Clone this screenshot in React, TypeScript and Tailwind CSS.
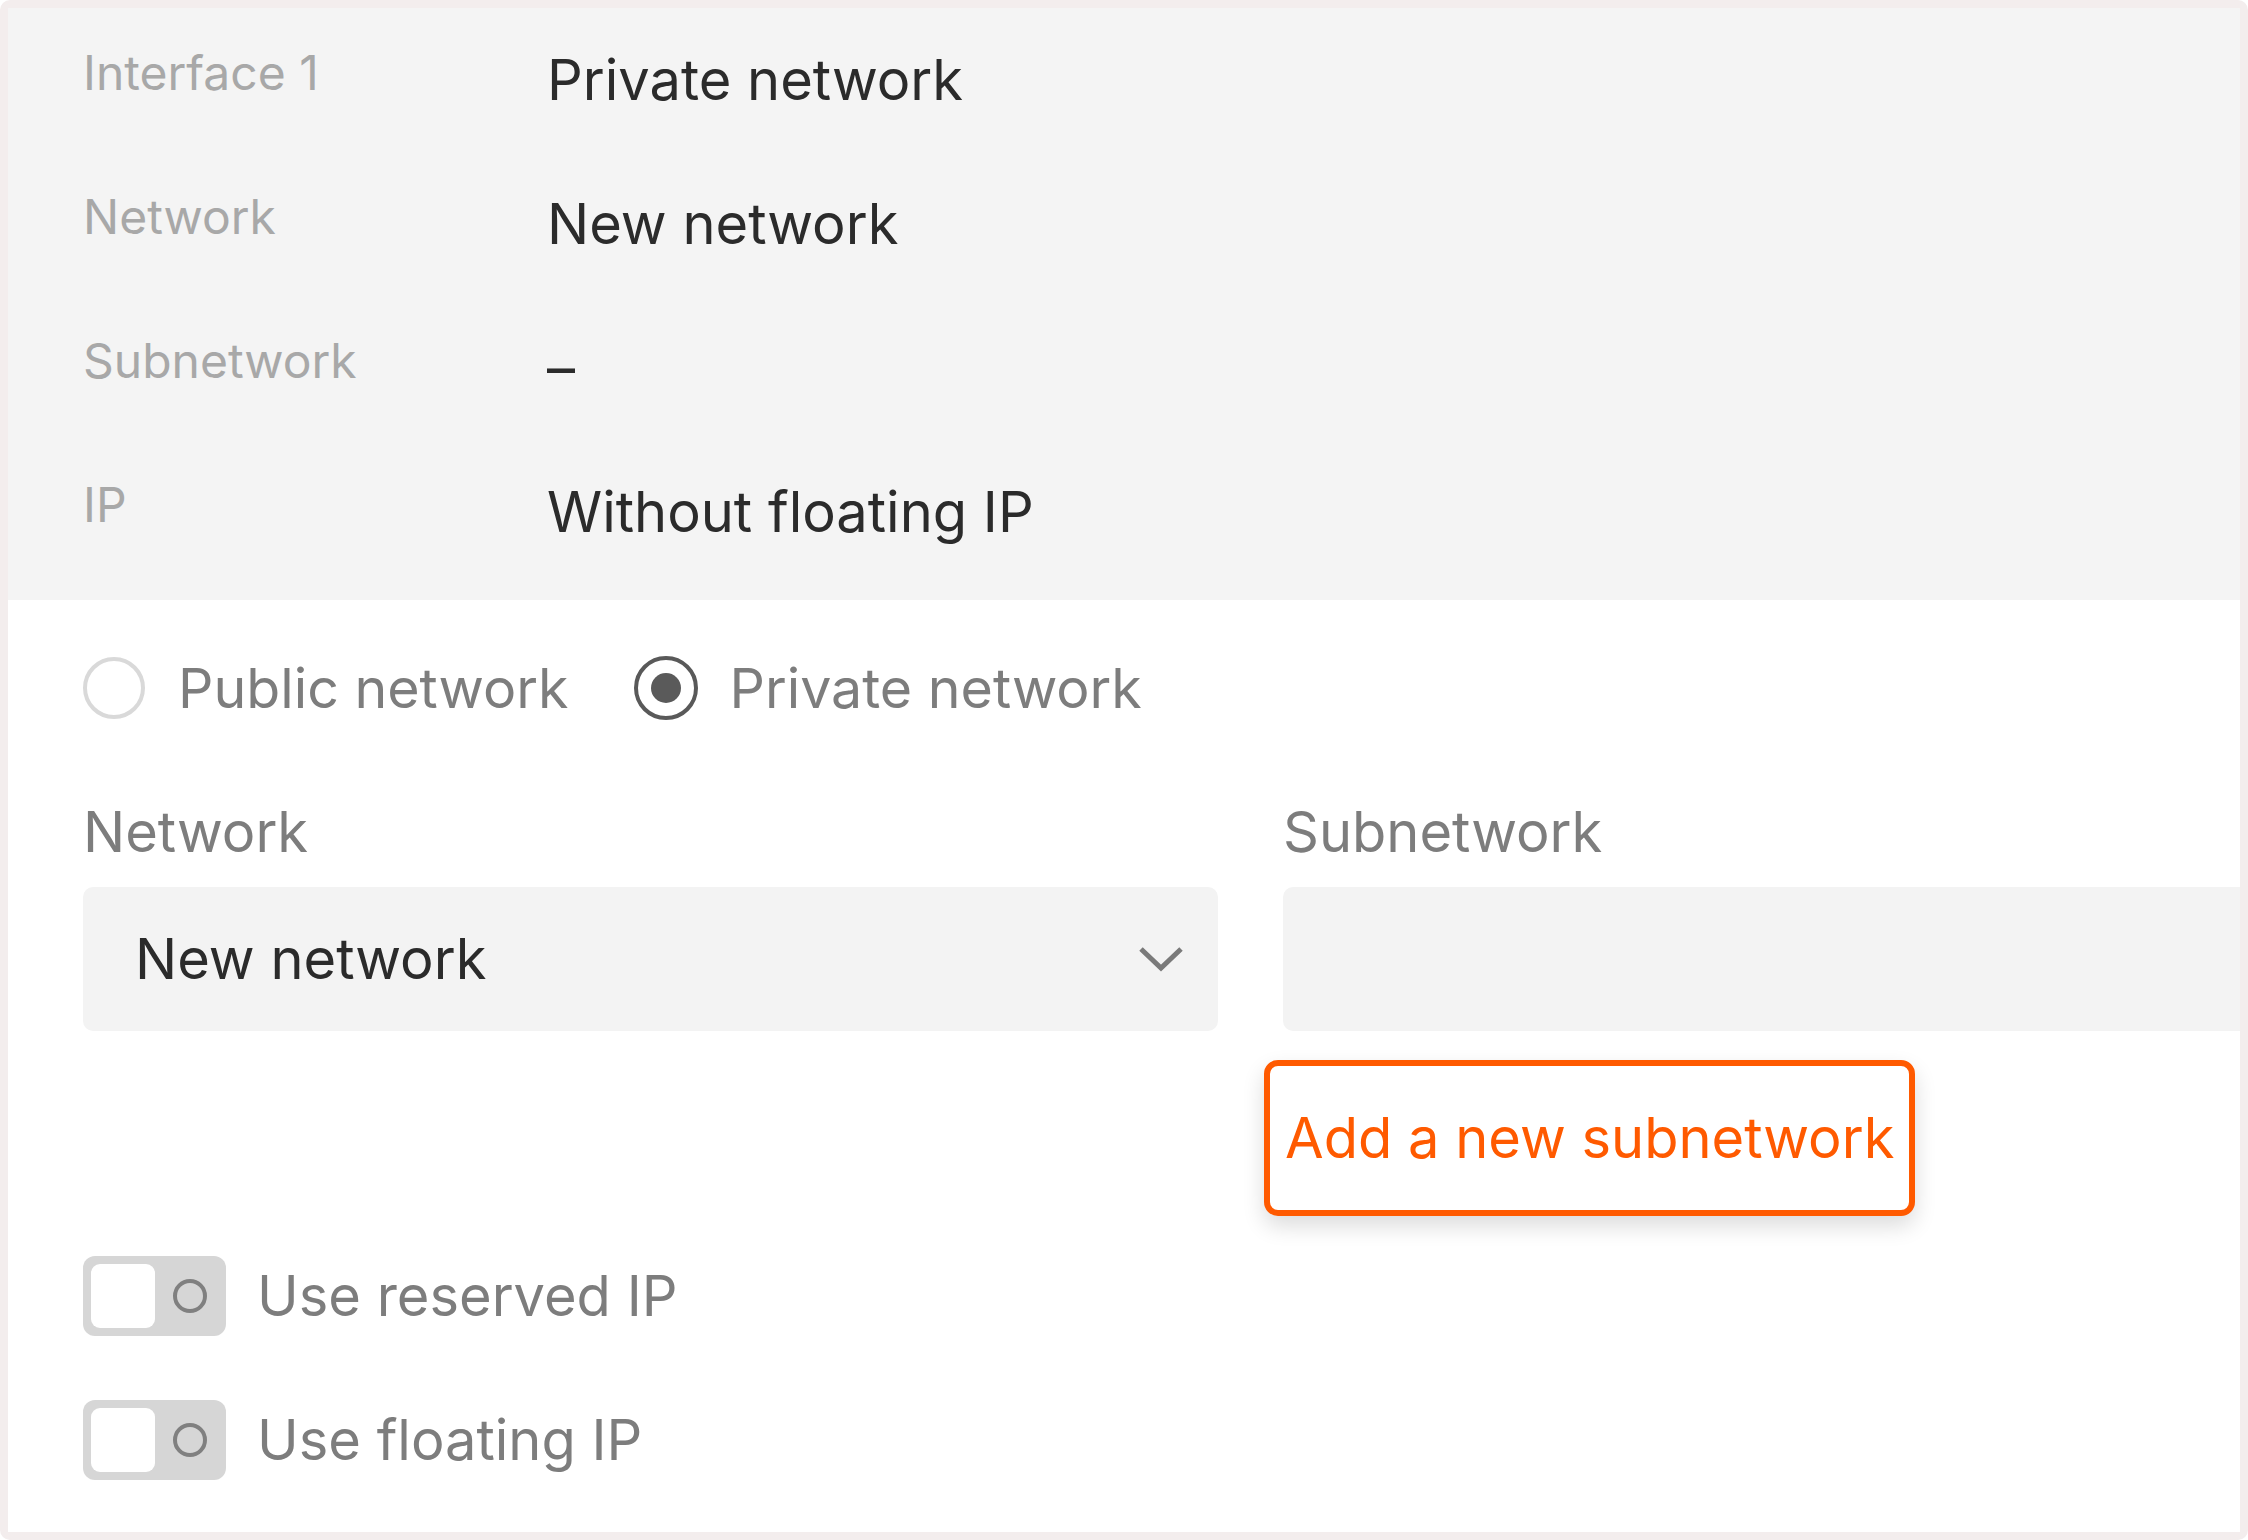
import React from "react";

const summary = [
  { label: "Interface 1", value: "Private network" },
  { label: "Network", value: "New network" },
  { label: "Subnetwork", value: "–" },
  { label: "IP", value: "Without floating IP" },
];

const Toggle = ({ label }: { label: string }) => {
  return (
    <div className="flex items-center gap-[31px]">
      <div className="w-[143px] h-[80px] rounded-[12px] bg-[#d6d6d6] p-[8px] flex items-center">
        <div className="w-[64px] h-[64px] rounded-[9px] bg-white" />
        <svg width="36" height="36" viewBox="0 0 36 36" className="ml-[17px]">
          <circle cx="18" cy="18" r="15" fill="none" stroke="#808080" strokeWidth="4" />
        </svg>
      </div>
      <span className="text-[56px] leading-[64px] text-[#7d7d7d]">{label}</span>
    </div>
  );
};

const App = () => {
  return (
    <div
      className="w-[2248px] h-[1540px] bg-white"
      style={{ fontFamily: "Inter, 'Noto Sans', sans-serif" }}
    >
      <div className="w-full h-full bg-[#f3eded] rounded-[10px] p-[8px]">
        <div className="w-full h-full bg-white overflow-hidden flex flex-col">
          {/* summary */}
          <div className="bg-[#f4f4f4] pb-[16px]">
            {summary.map((row) => (
              <div key={row.label} className="flex items-center h-[144px] pl-[75px]">
                <span className="w-[464px] shrink-0 text-[48px] leading-[60px] text-[#a8a8a8] mb-[14px]">
                  {row.label}
                </span>
                <span className="text-[56px] leading-[64px] text-[#2b2b2b]">
                  {row.value}
                </span>
              </div>
            ))}
          </div>

          <div className="pl-[75px]">
            {/* network type */}
            <div className="flex items-center h-[64px] mt-[56px]">
              <div className="w-[62px] h-[62px] rounded-full border-[4px] border-[#d9d9d9]" />
              <span className="ml-[33px] text-[55.5px] leading-[64px] text-[#7d7d7d]">
                Public network
              </span>
              <div className="ml-[66px] w-[64px] h-[64px] rounded-full border-[4px] border-[#595959] flex items-center justify-center">
                <div className="w-[30px] h-[30px] rounded-full bg-[#5a5a5a]" />
              </div>
              <span className="ml-[31px] text-[55.5px] leading-[64px] text-[#7d7d7d]">
                Private network
              </span>
            </div>

            {/* network / subnetwork */}
            <div className="grid grid-cols-[1135px_1135px] gap-x-[65px] mt-[80px]">
              <div>
                <div className="text-[56px] leading-[64px] text-[#7d7d7d] mb-[23px]">Network</div>
                <div className="h-[144px] rounded-[10px] bg-[#f3f3f3] flex items-center justify-between pl-[52px] pr-[34px]">
                  <span className="text-[56px] leading-[64px] text-[#2b2b2b]">New network</span>
                  <svg width="46" height="26" viewBox="0 0 46 26">
                    <polyline
                      points="3,3 23,22 43,3"
                      fill="none"
                      stroke="#7a7a7a"
                      strokeWidth="5"
                    />
                  </svg>
                </div>
              </div>
              <div>
                <div className="text-[56px] leading-[64px] text-[#7d7d7d] mb-[23px]">Subnetwork</div>
                <div className="h-[144px] rounded-[10px] bg-[#f3f3f3]" />
                <button className="mt-[29px] -ml-[19px] h-[156px] px-[15px] rounded-[14px] border-[6px] border-[#ff5a00] bg-white shadow-[0_10px_22px_rgba(0,0,0,0.14)] text-[56px] leading-[64px] text-[#ff5a00]">
                  Add a new subnetwork
                </button>
              </div>
            </div>

            {/* toggles */}
            <div className="flex flex-col gap-[64px] mt-[40px]">
              <Toggle label="Use reserved IP" />
              <Toggle label="Use floating IP" />
            </div>
          </div>
        </div>
      </div>
    </div>
  );
};

export default App;
